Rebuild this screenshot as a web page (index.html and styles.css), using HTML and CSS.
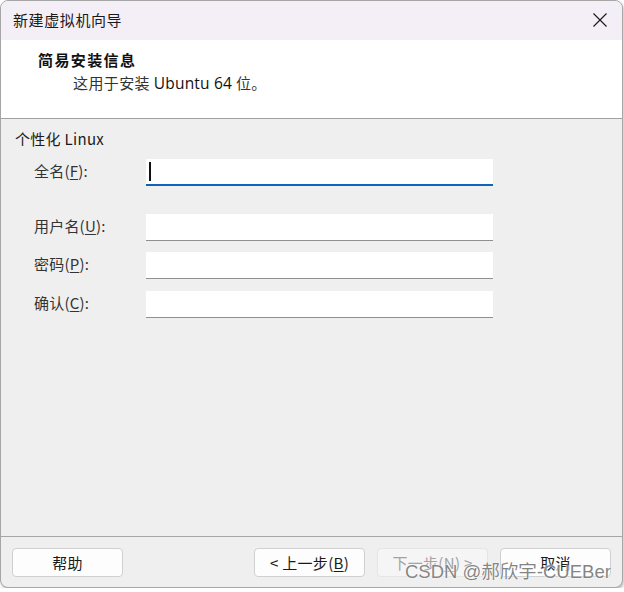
FILE: index.html
```html
<!DOCTYPE html>
<html lang="zh-CN">
<head>
<meta charset="utf-8">
<title>新建虚拟机向导</title>
<link rel="stylesheet" href="styles.css">
</head>
<body>
<div class="window">
  <div class="titlebar">
    <span class="title">新建虚拟机向导</span>
    <svg class="close" width="16" height="16" viewBox="0 0 16 16"><path d="M1.5 1.5 L14.5 14.5 M14.5 1.5 L1.5 14.5" stroke="#1c1c1c" stroke-width="1.2" fill="none"/></svg>
  </div>
  <div class="header">
    <div class="h-title">简易安装信息</div>
    <div class="h-sub">这用于安装 <span class="latin">Ubuntu 64</span> 位。</div>
  </div>
  <div class="content">
    <div class="group">个性化 Linux</div>
    <div class="form">
      <label class="lbl">全名(<u>F</u>):</label>
      <div class="input focus"><span class="caret"></span></div>
      <label class="lbl r2">用户名(<u>U</u>):</label>
      <div class="input r2"></div>
      <label class="lbl">密码(<u>P</u>):</label>
      <div class="input"></div>
      <label class="lbl r4">确认(<u>C</u>):</label>
      <div class="input r4"></div>
    </div>
  </div>
  <div class="footer">
    <button class="btn">帮助</button>
    <div class="spacer"></div>
    <button class="btn">&lt; 上一步(<u>B</u>)</button>
    <button class="btn disabled">下一步(<u>N</u>) &gt;</button>
    <button class="btn">取消</button>
  </div>
  <div class="watermark">CSDN @郝欣宇-CUEBer</div>
</div>
</body>
</html>
```
FILE: styles.css
```css
html, body {
  margin: 0;
  padding: 0;
  background: #ffffff;
}
body {
  font-family: "Noto Sans CJK SC", "Open Sans", sans-serif;
  color: #1a1a1a;
}
.window {
  position: relative;
  box-sizing: border-box;
  width: 623px;
  height: 588px;
  border: 1px solid #a6a6a6;
  border-radius: 8px;
  overflow: hidden;
  display: flex;
  flex-direction: column;
  background: #efefef;
  box-shadow: 1px 2px 3px rgba(0,0,0,0.25);
}
.titlebar {
  height: 39px;
  flex: none;
  background: #f4eff6;
  display: flex;
  align-items: center;
  padding: 0 14px 0 12px;
}
.title {
  font-size: 15px;
  letter-spacing: 0.6px;
  color: #1a1a1a;
  line-height: 20px;
  margin-top: -2px;
}
.close {
  margin-left: auto;
  margin-top: -1px;
}
.header {
  flex: none;
  background: #ffffff;
  border-bottom: 1px solid #a0a0a0;
  box-sizing: border-box;
  height: 79px;
  padding: 10px 0 0 37px;
}
.h-title {
  font-size: 15px;
  font-weight: bold;
  letter-spacing: 1.4px;
  line-height: 20px;
  color: #111;
}
.h-sub {
  font-size: 15px;
  line-height: 20px;
  margin: 3px 0 0 35px;
  color: #333;
  letter-spacing: 0.4px;
}
.latin {
  font-family: "Open Sans", "Noto Sans", sans-serif;
  font-size: 15.5px;
  color: #111;
  letter-spacing: 0.2px;
}
.content {
  flex: 1;
  padding: 10px 0 0 14px;
  font-size: 15px;
}
.group {
  line-height: 20px;
  color: #1a1a1a;
  letter-spacing: 0.3px;
}
.form {
  display: grid;
  grid-template-columns: 112px 347px;
  row-gap: 11px;
  margin: 10px 0 0 19px;
  align-items: center;
}
.lbl {
  color: #333;
  font-size: 15px;
  line-height: 20px;
  letter-spacing: 0.2px;
  margin-top: -3px;
}
.lbl u, .btn u {
  text-underline-offset: 2px;
}
.lbl.r2, .input.r2 {
  margin-top: 17px;
}
.lbl.r2 {
  margin-top: 14px;
}
.input.r4 {
  margin-top: 1px;
}
.input {
  height: 27px;
  box-sizing: border-box;
  background: #ffffff;
  border-bottom: 1px solid #8f8f8f;
  position: relative;
}
.input.focus {
  border-bottom: 2px solid #0f63bd;
}
.caret {
  position: absolute;
  left: 3px;
  top: 3px;
  width: 1.5px;
  height: 19px;
  background: #111;
}
.footer {
  flex: none;
  box-sizing: border-box;
  height: 51px;
  border-top: 1px solid #a6a6a6;
  display: flex;
  align-items: flex-start;
  padding: 11px 11px 0 11px;
  gap: 12px;
}
.spacer {
  flex: 1;
}
.btn {
  width: 111px;
  height: 29px;
  box-sizing: border-box;
  border: 1px solid #d0d0d0;
  border-radius: 4px;
  background: #fdfdfd;
  font-family: "Noto Sans CJK SC", "Open Sans", sans-serif;
  font-size: 15px;
  color: #1a1a1a;
  padding: 0;
  letter-spacing: 0.3px;
}
.btn.disabled {
  background: #f5f5f5;
  border-color: #e5e5e5;
  color: #a3a3a3;
}
.watermark {
  position: absolute;
  left: 404px;
  top: 559px;
  font-family: "Liberation Sans", "Noto Sans CJK SC", sans-serif;
  font-size: 18.5px;
  line-height: 24px;
  color: rgba(110,110,110,0.85);
  text-shadow: 0 0 2px #ffffff, 0 0 1px #ffffff;
  white-space: nowrap;
}
```
